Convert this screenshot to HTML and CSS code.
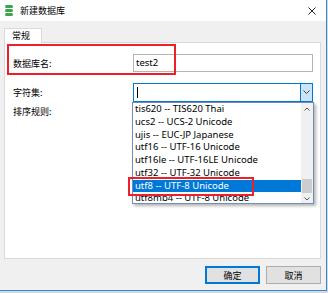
FILE: index.html
```html
<!DOCTYPE html>
<html>
<head>
<meta charset="utf-8">
<link rel="stylesheet" href="styles.css">
</head>
<body>
<div class="window">
  <div class="titlebar">
    <svg class="app-icon" width="8" height="11" viewBox="0 0 8 11">
      <rect x="0" y="0" width="8" height="3" rx="1.5" fill="#3aa64a"/>
      <rect x="0" y="4" width="8" height="3" rx="1.5" fill="#3aa64a"/>
      <rect x="0" y="8" width="8" height="3" rx="1.5" fill="#3aa64a"/>
    </svg>
    <span class="title">新建数据库</span>
    <svg class="close" width="8" height="8" viewBox="0 0 8 8">
      <path d="M0.5 0.5 L7.5 7.5 M7.5 0.5 L0.5 7.5" stroke="#222" stroke-width="1"/>
    </svg>
  </div>
  <div class="body">
    <div class="tabs"><div class="tab">常规</div></div>
    <div class="panel">
      <div class="row">
        <span class="label">数据库名:</span>
        <div class="input">test2</div>
      </div>
      <div class="row row-combo">
        <span class="label">字符集:</span>
        <div class="combo">
          <div class="combo-text"><span class="caret"></span></div>
          <div class="combo-btn">
            <svg width="7" height="4" viewBox="0 0 7 4"><path d="M0.5 0.5 L3.5 3.5 L6.5 0.5" fill="none" stroke="#444" stroke-width="1"/></svg>
          </div>
        </div>
      </div>
      <div class="row row-coll">
        <span class="label">排序规则:</span>
      </div>
      <div class="mark mark-name"></div>
      <div class="dropdown">
        <div class="list">
          <div class="item">tis620 -- TIS620 Thai</div>
          <div class="item">ucs2 -- UCS-2 Unicode</div>
          <div class="item">ujis -- EUC-JP Japanese</div>
          <div class="item">utf16 -- UTF-16 Unicode</div>
          <div class="item">utf16le -- UTF-16LE Unicode</div>
          <div class="item">utf32 -- UTF-32 Unicode</div>
          <div class="item selected">utf8 -- UTF-8 Unicode</div>
          <div class="item">utf8mb4 -- UTF-8 Unicode</div>
        </div>
        <div class="scrollbar">
          <div class="arrow">
            <svg width="6" height="4" viewBox="0 0 6 4"><path d="M0.5 3.5 L3 1 L5.5 3.5" fill="none" stroke="#555" stroke-width="1"/></svg>
          </div>
          <div class="track"><div class="thumb"></div></div>
          <div class="arrow">
            <svg width="6" height="4" viewBox="0 0 6 4"><path d="M0.5 0.5 L3 3 L5.5 0.5" fill="none" stroke="#555" stroke-width="1"/></svg>
          </div>
        </div>
        <div class="mark mark-item"></div>
      </div>
    </div>
    <div class="footer">
      <button class="btn btn-default">确定</button>
      <button class="btn">取消</button>
    </div>
  </div>
</div>
</body>
</html>
```

FILE: styles.css
```css
* { box-sizing: border-box; }
html, body { margin: 0; padding: 0; }
body {
  width: 328px;
  height: 293px;
  background: #d8d8d8;
  font-family: "Noto Sans", "Noto Sans CJK SC", sans-serif;
  font-size: 9.5px;
  color: #000;
  overflow: hidden;
}
.window {
  width: 327px;
  height: 291px;
  background: #f0f0f0;
  border-right: 1px solid #2b8ae0;
  border-bottom: 1px solid #2b8ae0;
}
.titlebar {
  height: 21px;
  background: #fff;
  display: flex;
  align-items: center;
  padding-left: 5px;
  padding-right: 10px;
}
.app-icon { flex: none; }
.title {
  margin-left: 7px;
  font-family: "Noto Sans CJK SC", sans-serif;
  font-size: 9px;
  flex: 1;
}
.close { flex: none; }
.body {
  height: 269px;
  padding: 7px 5px 0 4px;
}
.tabs { display: flex; height: 15px; }
.tab {
  position: relative;
  z-index: 1;
  width: 38px;
  height: 15px;
  background: #fff;
  border: 1px solid #d9d9d9;
  border-bottom: none;
  font-family: "Noto Sans CJK SC", sans-serif;
  font-size: 9px;
  line-height: 13px;
  padding-left: 7px;
}
.panel {
  position: relative;
  margin-top: -1px;
  height: 217px;
  background: #fff;
  border: 1px solid #d9d9d9;
  padding: 11px 7px 0 8px;
}
.row {
  display: flex;
  align-items: center;
  height: 18px;
}
.label {
  width: 120px;
  flex: none;
  font-family: "Noto Sans CJK SC", sans-serif;
  font-size: 9px;
}
.input {
  flex: 1;
  height: 18px;
  border: 1px solid #b4b4b4;
  padding-left: 2px;
  line-height: 15px;
  font-size: 9.5px;
}
.row-combo { margin-top: 11px; }
.combo {
  flex: 1;
  height: 19px;
  border: 1px solid #0078d7;
  display: flex;
  background: #fff;
}
.combo-text { flex: 1; display: flex; align-items: center; padding-left: 3px; }
.caret { width: 1px; height: 11px; background: #000; }
.combo-btn {
  width: 12px;
  background: #cce4f7;
  border-left: 1px solid #0078d7;
  display: flex;
  align-items: center;
  justify-content: center;
}
.row-coll { margin-top: 1px; }
.mark {
  position: absolute;
  border: 2px solid #ec2028;
  pointer-events: none;
}
.mark-name { left: 2px; top: 1px; width: 169px; height: 31px; }
.dropdown {
  position: absolute;
  left: 127px;
  top: 59px;
  width: 182px;
  height: 102px;
  background: #fff;
  border: 1px solid #6f8fb8;
  box-shadow: 2px 2px 3px rgba(0,0,0,0.3);
  display: flex;
}
.list { flex: 1; overflow: hidden; }
.item {
  height: 12.75px;
  line-height: 12.75px;
  padding-left: 2px;
  white-space: nowrap;
}
.item.selected { background: #0078d7; color: #fff; }
.scrollbar {
  width: 12px;
  background: #f0f0f0;
  display: flex;
  flex-direction: column;
}
.arrow {
  height: 12px;
  display: flex;
  align-items: center;
  justify-content: center;
  flex: none;
}
.track { flex: 1; padding-top: 64px; }
.thumb { height: 14px; background: #cdcdcd; margin: 0 1px; }
.mark-item { left: -5px; top: 74px; width: 126px; height: 19px; }
.footer {
  display: flex;
  justify-content: flex-end;
  gap: 6px;
  padding-top: 7px;
}
.btn {
  width: 55px;
  height: 18px;
  margin: 0;
  padding: 0;
  background: #e1e1e1;
  border: 1px solid #adadad;
  font-family: "Noto Sans CJK SC", sans-serif;
  font-size: 9px;
  color: #000;
}
.btn-default { border: 1px solid #0078d7; box-shadow: inset 0 0 0 1px #0078d7; }
```
